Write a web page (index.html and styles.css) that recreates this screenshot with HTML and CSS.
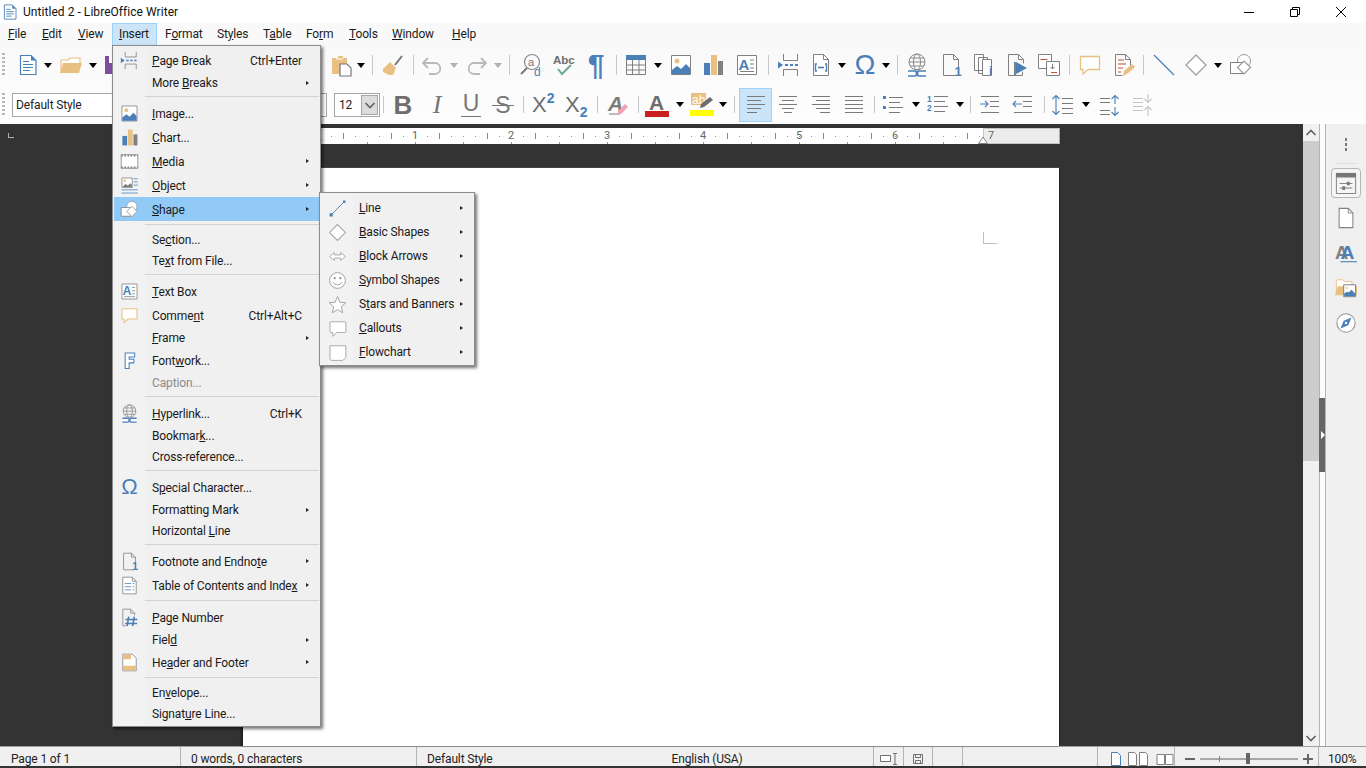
FILE: index.html
```html
<!DOCTYPE html>
<html lang="en">
<head>
<meta charset="utf-8">
<title>Untitled 2 - LibreOffice Writer</title>
<link rel="stylesheet" href="styles.css">
</head>
<body>
<svg class="defs" aria-hidden="true">
  <symbol id="doc" viewBox="0 0 24 24"><path d="M4.5 2.5h10.5l5 5v14H4.5z" fill="#fff" stroke="#4a7fb8" stroke-width="1.2"/><path d="M15 2.5v5h5z" fill="#4a7fb8"/><path d="M7 8.5h6M7 11.5h10M7 14.5h10M7 17.5h7" stroke="#4a7fb8" stroke-width="1.2"/></symbol>
  <symbol id="folder" viewBox="0 0 24 24"><path d="M2 19V7h7l2-2h10v6" fill="#fff" stroke="#e8c182" stroke-width="1.2"/><path d="M1 20l3-10h19l-3 10z" fill="#e8c182"/></symbol>
  <symbol id="save" viewBox="0 0 24 24"><path d="M2 3h20v18H2z" fill="#7d4e9f"/><path d="M6 3h12v7H6z" fill="#fff"/></symbol>
  <symbol id="paste" viewBox="0 0 24 24"><path d="M2 5h6V3h5v2h4v16H2z" fill="#e8c182"/><path d="M6 6h7" stroke="#fff"/><path d="M10 11h7l4 4v8H10z" fill="#fff" stroke="#777" stroke-width="1.2"/></symbol>
  <symbol id="brush" viewBox="0 0 24 24"><path d="M21 3l-7 9" stroke="#777" stroke-width="2"/><path d="M9 9l6 6-3 7H8l-6-3v-3z" fill="#e8c182"/></symbol>
  <symbol id="undo" viewBox="0 0 24 24"><path d="M8 5L3 10l5 5M3 10h12c7 0 7 11 0 11h-6" fill="none" stroke="#b9b9b9" stroke-width="1.8"/></symbol>
  <symbol id="redo" viewBox="0 0 24 24"><path d="M16 5l5 5-5 5M21 10H9c-7 0-7 11 0 11h6" fill="none" stroke="#b9b9b9" stroke-width="1.8"/></symbol>
  <symbol id="find" viewBox="0 0 24 24"><circle cx="13" cy="9" r="7.5" fill="none" stroke="#8a8a8a" stroke-width="1.2"/><path d="M8 15l-6 6" stroke="#777" stroke-width="2"/></symbol>
  <symbol id="spell" viewBox="0 0 24 24"><path d="M6 16l4 5 9-9" fill="none" stroke="#6fa98f" stroke-width="2"/></symbol>
  <symbol id="table" viewBox="0 0 24 24"><path d="M2 2h20v5H2z" fill="#4a7fb8"/><path d="M2.500 7v14.500h19V7M2.500 12h19M2.500 17h19M8.500 7v14M15 7v14" fill="none" stroke="#808080"/></symbol>
  <symbol id="image" viewBox="0 0 24 24"><path d="M2.500 2.500h19v19h-19z" fill="#fff" stroke="#808080"/><circle cx="8" cy="8" r="2.500" fill="#e8c182"/><path d="M3 21v-4l5-4 4 3 5-5 4 4v6z" fill="#4a7fb8"/></symbol>
  <symbol id="chart" viewBox="0 0 24 24"><path d="M3 10h6v12H3z" fill="#4a7fb8"/><path d="M10 2h6v20h-6z" fill="#e8c182"/><path d="M17 8h5v14h-5z" fill="#808080"/></symbol>
  <symbol id="tbox" viewBox="0 0 24 24"><path d="M2.500 2.500h19v19h-19z" fill="#fff" stroke="#808080"/><path d="M15 7h4M15 11h4M15 15h4M5 18.500h14" stroke="#808080"/></symbol>
  <symbol id="pbreak" viewBox="0 0 24 24"><path d="M6.500 1v6.500h14V1M6.500 23v-6.500h14V23" fill="none" stroke="#808080"/><path d="M8 12h3M13 12h3M18 12h3" stroke="#4a7fb8" stroke-width="2"/><path d="M1 8.500l5 3.500-5 3.500z" fill="#4a7fb8"/></symbol>
  <symbol id="field" viewBox="0 0 24 24"><path d="M4.500 1.500h10l5 5v16h-15z" fill="#fff" stroke="#808080"/><path d="M14.500 1.500v5h5" fill="none" stroke="#808080"/><path d="M8 11H6.500v7H8M16 11h1.500v7H16" fill="none" stroke="#4a7fb8" stroke-width="1.400"/><path d="M9 14.500h6" stroke="#4a7fb8" stroke-width="1.600"/></symbol>
  <symbol id="globe" viewBox="0 0 24 24"><circle cx="12" cy="9" r="8" fill="none" stroke="#8a8a8a"/><ellipse cx="12" cy="9" rx="3.500" ry="8" fill="none" stroke="#8a8a8a"/><path d="M4 9h16M5 5h14M5 13h14" stroke="#8a8a8a"/><path d="M3 18h7c2 0 2 5 0 5H3M21 18h-7c-2 0-2 5 0 5h7" fill="#fff" stroke="#4a7fb8" stroke-width="1.600"/></symbol>
  <symbol id="foot" viewBox="0 0 24 24"><path d="M4.500 1.500h10l5 5v14" fill="none" stroke="#808080"/><path d="M17 22.500H4.500v-21" fill="none" stroke="#808080"/><path d="M14.500 1.500v5h5" fill="none" stroke="#808080"/></symbol>
  <symbol id="end" viewBox="0 0 24 24"><path d="M2.500 1.500h9v16h-9zM6.500 4.500h9v16h-9z" fill="#fff" stroke="#808080"/><path d="M10.500 6.500h9v16h-9z" fill="#fff" stroke="#808080"/></symbol>
  <symbol id="bmark" viewBox="0 0 24 24"><path d="M3.500 22.500v-21h10l5 5v4M3.500 22.500h14v-4" fill="none" stroke="#808080"/><path d="M13.500 1.500v5h5" fill="none" stroke="#808080"/><path d="M9 9h2v13H9z" fill="#808080"/><path d="M11 9l11 6-11 6z" fill="#4a7fb8"/></symbol>
  <symbol id="xref" viewBox="0 0 24 24"><path d="M1.500 1.500h13v14h-13z" fill="#fff" stroke="#808080"/><path d="M9.500 8.500h13v14h-13z" fill="#fff" stroke="#808080"/><path d="M3.500 6.500h7M14 19.500h6" stroke="#c8502d" stroke-width="1.200"/><path d="M15.500 11v5M13.500 14l2 2 2-2" fill="none" stroke="#808080"/></symbol>
  <symbol id="comment" viewBox="0 0 24 24"><path d="M2.500 3.500h19v13H10l-5 4.500v-4.500H2.500z" fill="#fff" stroke="#e8c182" stroke-width="1.300"/></symbol>
  <symbol id="track" viewBox="0 0 24 24"><path d="M3.500 1.500h10l5 5v6M3.500 1.500v21h7" fill="none" stroke="#808080"/><path d="M13.500 1.500v5h5" fill="none" stroke="#808080"/><path d="M6 7h6M6 11h8M6 15h5M6 19h3" stroke="#c8502d" stroke-width="1.200"/><path d="M11 23l1-5 8-7 3 3-8 7z" fill="#e8c182"/></symbol>
  <symbol id="line" viewBox="0 0 24 24"><path d="M2 2l20 20" stroke="#4a7fb8" stroke-width="1.200"/></symbol>
  <symbol id="lineup" viewBox="0 0 24 24"><path d="M4 20L20 4" stroke="#4a7fb8" stroke-width="1.200"/><path d="M2 18h4v4H2zM19 2h3v3h-3z" fill="#4a7fb8"/></symbol>
  <symbol id="diamond" viewBox="0 0 24 24"><path d="M12 2l10 10-10 10L2 12z" fill="#fff" stroke="#a0a0a0" stroke-width="1.300"/></symbol>
  <symbol id="shapes" viewBox="0 0 24 24"><circle cx="15" cy="8" r="6.500" fill="#fff" stroke="#9a9a9a"/><path d="M1.500 9.500h13v11h-13z" fill="#fff" stroke="#808080"/><path d="M15 8l6.500 6.500L15 21l-6.500-6.500z" fill="#fff" stroke="#9a9a9a" stroke-width="1.200"/></symbol>
  <symbol id="clear" viewBox="0 0 24 24"><path d="M3 21h11" stroke="#7a7a7a"/></symbol>
  <symbol id="fcolor" viewBox="0 0 24 24"><path d="M0 18h24v6H0z" fill="#c9211e"/></symbol>
  <symbol id="hl" viewBox="0 0 24 24"><path d="M1 0h15v12H1z" fill="#e8c182"/><path d="M0 17h24v6H0z" fill="#ffff00"/></symbol>
  <symbol id="al" viewBox="0 0 24 24"><path d="M3 3.500h18M3 7.500h14M3 11.500h18M3 15.500h14M3 19.500h10" stroke="#7a7a7a"/></symbol>
  <symbol id="ac" viewBox="0 0 24 24"><path d="M3 3.500h18M6 7.500h12M3 11.500h18M6 15.500h12M8 19.500h8" stroke="#7a7a7a"/></symbol>
  <symbol id="ar" viewBox="0 0 24 24"><path d="M3 3.500h18M7 7.500h14M3 11.500h18M7 15.500h14M11 19.500h10" stroke="#7a7a7a"/></symbol>
  <symbol id="aj" viewBox="0 0 24 24"><path d="M3 3.500h18M3 7.500h18M3 11.500h18M3 15.500h18M3 19.500h18" stroke="#7a7a7a"/></symbol>
  <symbol id="bul" viewBox="0 0 24 24"><path d="M2 3h3v3H2zM2 13h3v3H2z" fill="#4a7fb8"/><path d="M8 4.500h14M8 9.500h11M8 14.500h14M8 19.500h11" stroke="#7a7a7a"/></symbol>
  <symbol id="num" viewBox="0 0 24 24"><path d="M9 3.500h14M9 8.500h11M9 13.500h14M9 18.500h11" stroke="#7a7a7a"/></symbol>
  <symbol id="ind" viewBox="0 0 24 24"><path d="M3 3.500h18M12 8.500h9M12 13.500h9M3 19.500h18" stroke="#7a7a7a"/><path d="M2 11h8M7 8l3 3-3 3" fill="none" stroke="#4a7fb8" stroke-width="1.100"/></symbol>
  <symbol id="out" viewBox="0 0 24 24"><path d="M3 3.500h18M12 8.500h9M12 13.500h9M3 19.500h18" stroke="#7a7a7a"/><path d="M11 11H2M5 8l-3 3 3 3" fill="none" stroke="#4a7fb8" stroke-width="1.100"/></symbol>
  <symbol id="space" viewBox="0 0 24 24"><path d="M11 5.500h11M11 10.500h11M11 15.500h11M11 20.500h11" stroke="#7a7a7a"/><path d="M5 2v20M1.500 6L5 2.500 8.500 6M1.500 18L5 21.500 8.500 18" fill="none" stroke="#4a7fb8" stroke-width="1.100"/></symbol>
  <symbol id="pup" viewBox="0 0 24 24"><path d="M2 5.500h10M2 9.500h10M2 17.500h10M2 21.500h10" stroke="#7a7a7a"/><path d="M17 3v8M13.500 6L17 2.500 20.500 6M17 14v8M13.500 19l3.500 3.500 3.500-3.500" fill="none" stroke="#4a7fb8" stroke-width="1.100"/></symbol>
  <symbol id="pdn" viewBox="0 0 24 24"><path d="M2 5.500h10M2 9.500h10M2 13.500h10M2 17.500h10" stroke="#c4c4c4"/><path d="M17 1v8M13.500 6L17 9.500 20.500 6M17 23v-9M13.500 17l3.500-3.500 3.500 3.500" fill="none" stroke="#c4c4c4" stroke-width="1.100"/></symbol>
  <symbol id="media" viewBox="0 0 24 24"><path d="M1.500 3.500h21v17h-21z" fill="#fff" stroke="#808080"/><path d="M1.500 4.500h21M1.500 19.500h21" stroke="#808080" stroke-width="2.500" stroke-dasharray="2 2"/></symbol>
  <symbol id="object" viewBox="0 0 24 24"><path d="M2.500 2.500h13v12h-13z" fill="#fff" stroke="#808080"/><circle cx="6" cy="6" r="1.500" fill="#e8c182"/><path d="M3 14l4-4 3 2 3-3 2 2v3z" fill="#808080"/><path d="M17.500 3.500h5M17.500 7.500h5M17.500 11.500h5M2 17.500h20.500M2 21.500h20.500" stroke="#4a7fb8"/></symbol>
  <symbol id="fontwork" viewBox="0 0 24 24"><path d="M6.500 2.500h12v5h-7v3h6v4.500h-6v7h-5z" fill="#fff" stroke="#4a7fb8" stroke-width="1.300"/></symbol>
  <symbol id="toc" viewBox="0 0 24 24"><path d="M3.500 1.500h12l5 5v16h-17z" fill="#fff" stroke="#808080"/><path d="M15.500 1.500v5h5" fill="none" stroke="#808080"/><path d="M6 9.500h8M16 9.500h2M6 13.500h8M16 13.500h2M6 17.500h8M16 17.500h2" stroke="#4a7fb8"/></symbol>
  <symbol id="pnum" viewBox="0 0 24 24"><path d="M3.500 22.500v-21h10l5 5v3M3.500 22.500h4" fill="none" stroke="#808080"/><path d="M13.500 1.500v5h5" fill="none" stroke="#808080"/><path d="M11 11l-2 12M18 11l-2 12M7 14.500h15M6.500 19.500h15" stroke="#4a7fb8" stroke-width="2"/></symbol>
  <symbol id="hf" viewBox="0 0 24 24"><path d="M3.500 1.500h12l5 5v16h-17z" fill="#fff" stroke="#808080"/><path d="M4 2h10v6H4zM4 16h16v6H4z" fill="#e8c182"/></symbol>
  <symbol id="arrows" viewBox="0 0 24 24"><path d="M2 12l6-5v3h8V7l6 5-6 5v-3H8v3z" fill="#fff" stroke="#9a9a9a"/></symbol>
  <symbol id="smile" viewBox="0 0 24 24"><circle cx="12" cy="12" r="10" fill="#fff" stroke="#a0a0a0" stroke-width="1.200"/><circle cx="8.500" cy="9" r="1.300" fill="#8a8a8a"/><circle cx="15.500" cy="9" r="1.300" fill="#8a8a8a"/><path d="M6.500 14c2 4.500 9 4.500 11 0" fill="none" stroke="#8a8a8a"/></symbol>
  <symbol id="star" viewBox="0 0 24 24"><path d="M12 2l3 7.200 7.500.6-5.700 5 1.800 7.700L12 18.400l-6.600 4.100 1.800-7.700-5.700-5L9 9.200z" fill="#fff" stroke="#a0a0a0" stroke-width="1.200"/></symbol>
  <symbol id="callout" viewBox="0 0 24 24"><path d="M3.500 3.500h18c.6 0 1 .4 1 1V16c0 .6-.4 1-1 1H11l-5 5v-5H3.500c-.6 0-1-.4-1-1V4.500c0-.6.400-1 1-1z" fill="#fff" stroke="#a0a0a0" stroke-width="1.100"/></symbol>
  <symbol id="flow" viewBox="0 0 24 24"><path d="M2.500 3.500h20v15l-4 3.500H5c-1.500 0-2.500-1-2.500-2.500z" fill="#fff" stroke="#a0a0a0" stroke-width="1.100"/></symbol>
  <symbol id="props" viewBox="0 0 24 24"><path d="M1 1h22v5H1z" fill="#777"/><path d="M1.500 6v17.500h21V6" fill="none" stroke="#777"/><path d="M5 12.500h14M5 17.500h14" stroke="#777"/><path d="M13 10.500h3v4h-3zM8 15.500h3v4H8z" fill="#777"/></symbol>
  <symbol id="page" viewBox="0 0 24 24"><path d="M4.500 1.500h10l5 5v16h-15z" fill="#fff" stroke="#808080" stroke-width="1.100"/><path d="M14.500 1.500v5h5" fill="none" stroke="#808080"/></symbol>
  <symbol id="gallery" viewBox="0 0 24 24"><path d="M1.500 19V5l1-2h6l2 2h8v5" fill="#fff" stroke="#e8c182"/><path d="M0 20l3-10h21v10z" fill="#e8c182"/><path d="M9.500 8.500h13v13h-13z" fill="#fff" stroke="#777"/><circle cx="13" cy="12" r="1.200" fill="#e8c182"/><path d="M10 21v-3l3-2 2 1 3-3 4 4v3z" fill="#4a7fb8"/></symbol>
  <symbol id="compass" viewBox="0 0 24 24"><circle cx="12" cy="12" r="10" fill="#fff" stroke="#909090" stroke-width="1.100"/><path d="M18 6l-3.500 8.500L6 18l3.500-8.500z" fill="#4a7fb8"/><circle cx="12" cy="12" r="1.300" fill="#fff"/></symbol>
  <symbol id="chev" viewBox="0 0 12 8"><path d="M1.500 6L6 1.500 10.500 6" fill="none" stroke="#606060" stroke-width="1.600"/></symbol>
  <symbol id="chevd" viewBox="0 0 12 8"><path d="M1.500 2L6 6.500 10.500 2" fill="none" stroke="#606060" stroke-width="1.600"/></symbol>
</svg>

<div class="app">
  <header class="title">
    <svg class="ti"><use href="#doc"/></svg>
    <span>Untitled 2 - LibreOffice Writer</span>
    <div class="win">
      <svg class="wb" viewBox="0 0 12 12"><path d="M1 6.500h10" stroke="#000"/></svg>
      <svg class="wb" viewBox="0 0 12 12"><path d="M1.500 3.500h7v7h-7zM3.500 3.500v-2h7v7h-2" fill="none" stroke="#000"/></svg>
      <svg class="wb" viewBox="0 0 12 12"><path d="M1 1l10 10M11 1L1 11" stroke="#000"/></svg>
    </div>
  </header>

  <nav class="menubar">
    <span class="mi"><u>F</u>ile</span>
    <span class="mi"><u>E</u>dit</span>
    <span class="mi"><u>V</u>iew</span>
    <span class="mi on"><u>I</u>nsert</span>
    <span class="mi">F<u>o</u>rmat</span>
    <span class="mi">St<u>y</u>les</span>
    <span class="mi">T<u>a</u>ble</span>
    <span class="mi">Fo<u>r</u>m</span>
    <span class="mi"><u>T</u>ools</span>
    <span class="mi"><u>W</u>indow</span>
    <span class="mi"><u>H</u>elp</span>
  </nav>

  <div class="tb tb1">
    <i class="grip"></i>
    <svg class="i"><use href="#doc"/></svg><i class="dd"></i>
    <svg class="i"><use href="#folder"/></svg><i class="dd"></i>
    <svg class="i"><use href="#save"/></svg>
    <svg class="i"><use href="#paste"/></svg><i class="dd"></i><i class="vs"></i>
    <svg class="i"><use href="#brush"/></svg><i class="vs"></i>
    <svg class="i"><use href="#undo"/></svg><i class="dd g"></i>
    <svg class="i"><use href="#redo"/></svg><i class="dd g"></i><i class="vs"></i>
    <svg class="i" viewBox="0 0 24 24"><use href="#find"/><text x="9" y="13" class="sv" font-size="11" fill="#777">a</text><text x="15" y="23" class="sv" font-size="12" fill="#4a7fb8">d</text></svg>
    <svg class="i" viewBox="0 0 24 24"><use href="#spell"/><text x="1" y="11" class="sv sb" font-size="11.5" fill="#6e6e6e">Abc</text></svg>
    <span class="gly pil">¶</span><i class="vs"></i>
    <svg class="i"><use href="#table"/></svg><i class="dd"></i>
    <svg class="i"><use href="#image"/></svg>
    <svg class="i"><use href="#chart"/></svg>
    <svg class="i" viewBox="0 0 24 24"><use href="#tbox"/><text x="3.500" y="16.500" class="sv sb" font-size="15" fill="#4a7fb8">A</text></svg><i class="vs"></i>
    <svg class="i"><use href="#pbreak"/></svg>
    <svg class="i"><use href="#field"/></svg><i class="dd"></i>
    <span class="gly om">Ω</span><i class="dd"></i><i class="vs"></i>
    <svg class="i"><use href="#globe"/></svg>
    <svg class="i" viewBox="0 0 24 24"><use href="#foot"/><text x="15.500" y="23" class="sv sb" font-size="13" fill="#4a7fb8">1</text></svg>
    <svg class="i" viewBox="0 0 24 24"><use href="#end"/><text x="17" y="22" class="sv sb" font-size="12" fill="#4a7fb8">i</text></svg>
    <svg class="i"><use href="#bmark"/></svg>
    <svg class="i"><use href="#xref"/></svg><i class="vs"></i>
    <svg class="i"><use href="#comment"/></svg>
    <svg class="i"><use href="#track"/></svg><i class="vs"></i>
    <svg class="i"><use href="#line"/></svg>
    <svg class="i"><use href="#diamond"/></svg><i class="dd"></i>
    <svg class="i"><use href="#shapes"/></svg>
  </div>

  <div class="tb tb2">
    <i class="grip"></i>
    <div class="combo">Default Style</div>
    <div class="size"><span>12</span><b class="sbtn"><svg class="cv"><use href="#chevd"/></svg></b></div>
    <i class="vs s"></i>
    <span class="gly bd">B</span>
    <span class="gly it">I</span>
    <span class="gly un">U</span>
    <span class="gly st">S</span>
    <i class="vs s"></i>
    <span class="gly sx">X<sup>2</sup></span>
    <span class="gly sx">X<sub>2</sub></span>
    <i class="vs s"></i>
    <svg class="i" viewBox="0 0 24 24"><use href="#clear"/><text x="2" y="18" class="sv sb ital" font-size="21" fill="#7a7a7a">A</text><path d="M12 18l7-7 3 3-7 7h-3z" fill="#f0a0b0"/></svg><i class="vs s"></i>
    <svg class="i" viewBox="0 0 24 24"><use href="#fcolor"/><text x="4" y="17" class="sv sb" font-size="21" fill="#6e6e6e">A</text></svg><i class="dd"></i>
    <svg class="i" viewBox="0 0 24 24"><use href="#hl"/><text x="2" y="11" class="sv" font-size="12" fill="#fff">ab</text><path d="M10 15l1-4 9-7 3 3-9 7z" fill="#6e6e6e"/></svg><i class="dd"></i><i class="vs s"></i>
    <div class="act"><svg class="i"><use href="#al"/></svg></div>
    <svg class="i"><use href="#ac"/></svg>
    <svg class="i"><use href="#ar"/></svg>
    <svg class="i"><use href="#aj"/></svg><i class="vs s"></i>
    <svg class="i"><use href="#bul"/></svg><i class="dd"></i>
    <svg class="i" viewBox="0 0 24 24"><use href="#num"/><text x="2" y="9" class="sv sb" font-size="8.500" fill="#4a7fb8">1</text><text x="2" y="18" class="sv sb" font-size="8.500" fill="#4a7fb8">2</text></svg><i class="dd"></i><i class="vs s"></i>
    <svg class="i"><use href="#ind"/></svg>
    <svg class="i"><use href="#out"/></svg><i class="vs s"></i>
    <svg class="i"><use href="#space"/></svg><i class="dd"></i>
    <svg class="i"><use href="#pup"/></svg>
    <svg class="i"><use href="#pdn"/></svg>
  </div>

  <main class="work">
    <section class="canvas">
      <div class="rrow">
        <div class="tabcell"><i class="tabmark"></i></div>
        <div class="ruler">
          <div class="rm"></div>
          <div class="rbody">
            <span>1</span><span>2</span><span>3</span><span>4</span><span>5</span><span>6</span><span>7</span>
            <svg class="rtri" viewBox="0 0 10 8"><path d="M.5 7.500L5 1l4.500 6.500z" fill="#fff" stroke="#808080"/></svg>
          </div>
          <div class="rm rmr"></div>
        </div>
      </div>
      <div class="page"><i class="crop"></i></div>
    </section>
    <aside class="vscroll">
      <div class="sbb"><svg class="cv"><use href="#chev"/></svg></div>
      <div class="thumb"></div>
      <div class="track"></div>
      <div class="sbb"><svg class="cv"><use href="#chevd"/></svg></div>
    </aside>
    <div class="split"><div class="handle"><i></i></div></div>
    <aside class="side">
      <div class="dots"><i></i><i></i><i></i></div>
      <hr class="shr">
      <div class="sb on"><svg class="si"><use href="#props"/></svg></div>
      <div class="sb"><svg class="si"><use href="#page"/></svg></div>
      <div class="sb"><svg class="si" viewBox="0 0 24 24"><text x="0" y="18" class="sv sb" font-size="20" fill="#808080">A</text><text x="6" y="19" class="sv sb" font-size="21" fill="#4a7fb8">A</text><path d="M6 21.500h18" stroke="#4a7fb8" stroke-width="1.200"/></svg></div>
      <div class="sb"><svg class="si"><use href="#gallery"/></svg></div>
      <div class="sb"><svg class="si"><use href="#compass"/></svg></div>
    </aside>
  </main>

  <footer class="status">
    <span class="c first">Page 1 of 1</span>
    <span class="c">0 words, 0 characters</span>
    <span class="c lang"><span>Default Style</span><span class="eng">English (USA)</span></span>
    <span class="c ctr"><svg class="st1" viewBox="0 0 18 14"><path d="M.5 3.500h10v6H.500z" fill="#fff" stroke="#707070"/><path d="M13 1.500h4M13 12.500h4M15 1.500v11" stroke="#707070"/></svg></span>
    <span class="c ctr"><svg class="st2" viewBox="0 0 12 12"><path d="M1.500 1.500h9v9h-9zM3.500 1.500v3h5v-3M3.500 10.500v-3h5v3" fill="none" stroke="#707070"/></svg></span>
    <span class="c"></span>
    <span class="c"></span>
    <span class="c views">
      <svg class="v1" viewBox="0 0 10 14"><path d="M.5 .5h6l3 3v10h-9z" fill="#fff" stroke="#4a7fb8"/></svg>
      <svg class="v2" viewBox="0 0 20 14"><path d="M.5 .5h6l2 2v11h-8zM11.500 .5h6l2 2v11h-8z" fill="#fff" stroke="#808080"/></svg>
      <svg class="v3" viewBox="0 0 18 14"><path d="M1 2.500h7.500v10H1zM9.500 2.500H17v10H9.500z" fill="#fff" stroke="#808080"/></svg>
    </span>
    <span class="c zoom">
      <i class="zm"></i>
      <span class="zs"><i class="zn"></i><i class="zt"></i></span>
      <i class="zp"></i>
    </span>
    <span class="pct">100%</span>
  </footer>
  <div class="foot"></div>

  <div class="menu m1">
    <div class="r"><span class="ic"><svg><use href="#pbreak"/></svg></span><span class="l"><u>P</u>age Break</span><span class="k">Ctrl+Enter</span></div>
    <div class="r n"><span class="ic"></span><span class="l">More <u>B</u>reaks</span><i class="a"></i></div>
    <div class="sep"></div>
    <div class="r"><span class="ic"><svg><use href="#image"/></svg></span><span class="l"><u>I</u>mage...</span></div>
    <div class="r"><span class="ic"><svg><use href="#chart"/></svg></span><span class="l"><u>C</u>hart...</span></div>
    <div class="r"><span class="ic"><svg><use href="#media"/></svg></span><span class="l"><u>M</u>edia</span><i class="a"></i></div>
    <div class="r"><span class="ic"><svg><use href="#object"/></svg></span><span class="l"><u>O</u>bject</span><i class="a"></i></div>
    <div class="r hot"><span class="ic"><svg><use href="#shapes"/></svg></span><span class="l"><u>S</u>hape</span><i class="a"></i></div>
    <div class="sep"></div>
    <div class="r n"><span class="ic"></span><span class="l">Se<u>c</u>tion...</span></div>
    <div class="r n"><span class="ic"></span><span class="l">Te<u>x</u>t from File...</span></div>
    <div class="sep"></div>
    <div class="r"><span class="ic"><svg viewBox="0 0 24 24"><use href="#tbox"/><text x="3.500" y="16.500" class="sv sb" font-size="15" fill="#4a7fb8">A</text></svg></span><span class="l"><u>T</u>ext Box</span></div>
    <div class="r"><span class="ic"><svg><use href="#comment"/></svg></span><span class="l">Comme<u>n</u>t</span><span class="k">Ctrl+Alt+C</span></div>
    <div class="r n"><span class="ic"></span><span class="l"><u>F</u>rame</span><i class="a"></i></div>
    <div class="r"><span class="ic"><svg><use href="#fontwork"/></svg></span><span class="l">Font<u>w</u>ork...</span></div>
    <div class="r n off"><span class="ic"></span><span class="l">Caption...</span></div>
    <div class="sep"></div>
    <div class="r"><span class="ic"><svg><use href="#globe"/></svg></span><span class="l"><u>H</u>yperlink...</span><span class="k">Ctrl+K</span></div>
    <div class="r n"><span class="ic"></span><span class="l">Bookmar<u>k</u>...</span></div>
    <div class="r n"><span class="ic"></span><span class="l">Cross-reference...</span></div>
    <div class="sep"></div>
    <div class="r"><span class="ic omi">Ω</span><span class="l">S<u>p</u>ecial Character...</span></div>
    <div class="r n"><span class="ic"></span><span class="l">Formattin<u>g</u> Mark</span><i class="a"></i></div>
    <div class="r n"><span class="ic"></span><span class="l">Horizontal <u>L</u>ine</span></div>
    <div class="sep"></div>
    <div class="r"><span class="ic"><svg viewBox="0 0 24 24"><use href="#foot"/><text x="15.500" y="23" class="sv sb" font-size="13" fill="#4a7fb8">1</text></svg></span><span class="l">Footnote and Endno<u>t</u>e</span><i class="a"></i></div>
    <div class="r"><span class="ic"><svg><use href="#toc"/></svg></span><span class="l">Table of Contents and Inde<u>x</u></span><i class="a"></i></div>
    <div class="sep"></div>
    <div class="r"><span class="ic"><svg><use href="#pnum"/></svg></span><span class="l"><u>P</u>age Number</span></div>
    <div class="r n"><span class="ic"></span><span class="l">Fiel<u>d</u></span><i class="a"></i></div>
    <div class="r"><span class="ic"><svg><use href="#hf"/></svg></span><span class="l">He<u>a</u>der and Footer</span><i class="a"></i></div>
    <div class="sep"></div>
    <div class="r n"><span class="ic"></span><span class="l">En<u>v</u>elope...</span></div>
    <div class="r n"><span class="ic"></span><span class="l">Signat<u>u</u>re Line...</span></div>
  </div>

  <div class="menu m2">
    <div class="r"><span class="ic"><svg><use href="#lineup"/></svg></span><span class="l"><u>L</u>ine</span><i class="a"></i></div>
    <div class="r"><span class="ic"><svg><use href="#diamond"/></svg></span><span class="l"><u>B</u>asic Shapes</span><i class="a"></i></div>
    <div class="r"><span class="ic"><svg><use href="#arrows"/></svg></span><span class="l"><u>B</u>lock Arrows</span><i class="a"></i></div>
    <div class="r"><span class="ic"><svg><use href="#smile"/></svg></span><span class="l"><u>S</u>ymbol Shapes</span><i class="a"></i></div>
    <div class="r"><span class="ic"><svg><use href="#star"/></svg></span><span class="l">S<u>t</u>ars and Banners</span><i class="a"></i></div>
    <div class="r"><span class="ic"><svg><use href="#callout"/></svg></span><span class="l"><u>C</u>allouts</span><i class="a"></i></div>
    <div class="r"><span class="ic"><svg><use href="#flow"/></svg></span><span class="l"><u>F</u>lowchart</span><i class="a"></i></div>
  </div>
</div>
</body>
</html>
```
FILE: styles.css
```css
* { box-sizing: border-box; }
html, body { margin: 0; padding: 0; }
body { font: 12px/16px Roboto, "Liberation Sans", sans-serif; letter-spacing: -.14px; color: #1a1a1a; background: #333; }
i { display: block; font-style: normal; }
.defs { position: absolute; width: 0; height: 0; }
.sv { font-family: "Liberation Sans", sans-serif; letter-spacing: 0; }
.sb { font-weight: 700; }
.ital { font-style: italic; }

.app { position: relative; width: 1366px; height: 768px; overflow: hidden; display: flex; flex-direction: column; }

.title { height: 23px; flex: none; background: #fff; display: flex; align-items: center; padding-left: 1px; font-size: 12px; letter-spacing: .05px; color: #111; gap: 4px; }
.ti { width: 18px; height: 18px; }
.win { margin-left: auto; display: flex; gap: 34px; padding-right: 19px; }
.wb { width: 12px; height: 12px; }

.menubar { height: 22px; flex: none; background: #f9f9f9; display: grid; grid-template-columns: 34px 36px 42px 45px 52px 46px 43px 43px 43px 60px 41px; align-items: stretch; }
.mi { padding: 3px 0 0 8px; }
.mi.on { background: #cce4f7; border: 1px solid #99d1ff; border-bottom: 0; padding: 2px 0 0 6px; }

.tb { flex: none; display: grid; align-items: center; justify-items: start; padding-left: 2px; background: #fbfbfb; }
.tb1 { height: 40px; background: linear-gradient(#f9f9f9, #fbfbfb);
  grid-template-columns: 14px 28px 15px 30px 14px 227px 27px 15px 9px 32px 7px 30px 15px 29px 15px 10px 33px 32px 32px 8px 30px 15px 32px 34px 33px 9px 32px 29px 15px 29px 15px 8px 34px 33px 33px 32px 32px 9px 34px 31px 9px 32px 30px 15px 24px; }
.tb2 { height: 39px; background: linear-gradient(#fbfbfb, #fdfdfd);
  grid-template-columns: 10px 322px 49px 8px 34px 34px 32px 32px 9px 33px 32px 9px 32px 7px 31px 14px 29px 15px 5px 37px 33px 33px 32px 7px 31px 13px 31px 14px 8px 33px 33px 7px 31px 16px 33px 24px; }
.i { width: 24px; height: 24px; display: block; }
.grip { width: 3px; height: 24px; background: repeating-linear-gradient(#b8b8b8 0 2px, transparent 2px 4px); }
.dd { width: 0; height: 0; border: 4.5px solid transparent; border-top: 5px solid #000; border-bottom: 0; }
.dd.g { border-top-color: #b0b0b0; }
.vs { width: 1px; height: 20px; background: #c8c8c8; }
.vs.s { height: 17px; }
.gly { position: relative; width: 24px; text-align: center; display: block; font-family: "Liberation Sans", sans-serif; letter-spacing: 0; color: #6e6e6e; line-height: 24px; }
.pil { font-size: 30px; font-weight: 700; color: #4a7fb8; line-height: 24px; }
.om { font-size: 28px; color: #4a7fb8; }
.bd { font-size: 26px; font-weight: 700; }
.it { font-size: 26px; font-style: italic; font-family: "Liberation Serif", serif; color: #777; }
.un { font-size: 23px; line-height: 20px; height: 24px; color: #777; }
.un::after { content: ""; position: absolute; left: 2px; right: 2px; bottom: 0; height: 1px; background: #777; }
.st { font-size: 23px; color: #777; }
.st::after { content: ""; position: absolute; left: 1px; right: 1px; top: 12px; height: 1px; background: #777; }
.sx { font-size: 22px; width: 28px; white-space: nowrap; text-align: left; color: #6e6e6e; }
.sx sup, .sx sub { font-size: 14px; font-weight: 700; color: #4a7fb8; line-height: 0; vertical-align: baseline; position: relative; }
.sx sup { top: -9px; }
.sx sub { top: 5px; }
.combo { width: 315px; height: 24px; background: #fff; border: 1px solid #a6a6a6; padding: 3px 0 0 3px; color: #222; }
.size { width: 46px; height: 24px; background: #fff; border: 1px solid #a6a6a6; padding: 1px 1px 1px 4px; display: flex; justify-content: space-between; align-items: center; color: #222; }
.sbtn { width: 17px; height: 20px; background: #dcdcdc; border: 1px solid #a6a6a6; display: flex; align-items: center; justify-content: center; }
.cv { width: 12px; height: 8px; display: block; }
.act { width: 33px; height: 34px; background: #cce4f7; border: 1px solid #99d1ff; display: flex; align-items: center; justify-content: center; }

.work { flex: 1; min-height: 0; display: flex; }
.canvas { flex: 1; background: #333; display: flex; flex-direction: column; min-width: 0; }
.rrow { display: flex; height: 44px; padding-top: 4px; flex: none; }
.tabcell { width: 243px; flex: none; padding: 5px 0 0 8px; }
.tabmark { width: 6px; height: 5px; border-left: 1px solid #b0b0b0; border-bottom: 1px solid #b0b0b0; }
.ruler { width: 817px; height: 16px; display: flex; background: #fff; font-size: 11px; color: #666; line-height: 16px; }
.rm { width: 76px; flex: none; background: #ececec; }
.rmr { width: 77px; border: 1px solid #c4c4c4; border-right-color: #aaa; }
.rbody { position: relative; width: 664px; flex: none; display: flex; padding-left: 48px;
  background:
    repeating-linear-gradient(90deg, #999 0 1px, transparent 1px 48px) 0 14px / 100% 2px no-repeat,
    repeating-linear-gradient(90deg, transparent 0 24px, #888 24px 25px, transparent 25px 48px) 0 5px / 100% 6px no-repeat,
    repeating-linear-gradient(90deg, #999 0 1px, transparent 1px 12px) 0 8px / 100% 1px no-repeat,
    #fff; }
.rbody::before { content: ""; position: absolute; left: 1px; top: 1px; width: 3px; height: 12px; border-left: 1px solid #808080; border-radius: 3px 0 0 3px; }
.rbody span { width: 96px; flex: none; text-align: center; }
.rtri { position: absolute; right: -5px; bottom: 0; width: 10px; height: 8px; }
.page { position: relative; margin-left: 243px; width: 817px; flex: 1; background: #fff; border-right: 1px solid #222; box-shadow: 0 -1px 0 #444, -2px 0 2px rgba(0,0,0,.4); }
.crop { position: absolute; left: 740px; top: 64px; width: 14px; height: 12px; border-left: 1px solid #c0c0c0; border-bottom: 1px solid #c0c0c0; }

.vscroll { width: 16px; flex: none; background: #f0f0f0; display: flex; flex-direction: column; }
.sbb { height: 17px; flex: none; display: flex; align-items: center; justify-content: center; }
.thumb { height: 320px; flex: none; background: #cdcdcd; }
.track { flex: 1; }
.split { width: 7px; flex: none; background: #fbfbfb; border-left: 1px solid #b4b4b4; border-right: 1px solid #b4b4b4; padding-top: 274px; }
.handle { width: 6px; height: 74px; margin-left: -1px; background: #666; display: flex; align-items: center; padding-left: 2px; }
.handle i { width: 0; height: 0; border: 4px solid transparent; border-left: 4px solid #fff; border-right: 0; }
.side { width: 40px; flex: none; background: #f0f0f0; display: flex; flex-direction: column; align-items: center; }
.dots { margin-top: 14px; display: flex; flex-direction: column; gap: 2px; }
.dots i { width: 2px; height: 3px; background: #777; }
.shr { width: 22px; height: 1px; border: 0; background: #dcdcdc; margin: 12px 0 4px; }
.sb { width: 30px; height: 30px; margin-bottom: 5px; display: flex; align-items: center; justify-content: center; border: 1px solid transparent; border-radius: 4px; }
.sb.on { background: #f5f5f5; border-color: #b4b4b4; }
.si { width: 22px; height: 22px; }

.status { height: 20px; flex: none; background: #f0f0f0; border-top: 1px solid #a0a0a0; display: grid; align-items: stretch; grid-template-columns: 181px 236px 457px 30px 29px 30px 135px 77px 144px 47px; line-height: 24px; color: #222; overflow: hidden; }
.c { border-right: 1px solid #b4b4b4; padding-left: 10px; white-space: nowrap; }
.c.first { padding-left: 11px; }
.lang { display: flex; }
.eng { margin-left: 179px; }
.ctr { padding: 0; display: flex; align-items: center; justify-content: center; }
.st1 { width: 18px; height: 14px; }
.st2 { width: 12px; height: 12px; }
.views { padding: 0 0 0 13px; display: flex; align-items: center; gap: 7px; }
.v1 { width: 10px; height: 14px; }
.v2 { width: 20px; height: 14px; }
.v3 { width: 18px; height: 14px; margin-left: 1px; }
.zoom { padding: 0 0 0 10px; display: flex; align-items: center; }
.zm { width: 10px; height: 2px; background: #666; }
.zs { position: relative; width: 98px; height: 2px; background: #a8a8a8; margin: 0 5px; }
.zn { position: absolute; left: 19px; top: -2px; width: 1px; height: 6px; background: #888; }
.zt { position: absolute; left: 46px; top: -5px; width: 4px; height: 11px; background: #666; }
.zp { position: relative; width: 10px; height: 2px; background: #666; }
.zp::before { content: ""; position: absolute; left: 4px; top: -4px; width: 2px; height: 10px; background: #666; }
.pct { padding-left: 9px; }
.foot { height: 2px; flex: none; background: #333; }

.menu { position: absolute; background: linear-gradient(90deg, #f2f2f2 0 33px, #f0f0f0 33px); border: 1px solid #8c8c8c; box-shadow: 2px 2px 3px rgba(0,0,0,.55); color: #1a1a1a; }
.m1 { left: 112px; top: 45px; width: 209px; padding: 2px 1px; }
.m2 { left: 319px; top: 192px; width: 156px; padding: 3px 1px 1px; }
.r { height: 24px; display: flex; align-items: center; }
.r.n { height: 21px; }
.r.hot { background: #91c9f7; }
.r.off { color: #8a8a8a; }
.ic { width: 31px; flex: none; display: flex; align-items: center; justify-content: center; }
.ic svg { width: 19px; height: 19px; display: block; }
.omi { font: 22px/24px "Liberation Sans", sans-serif; color: #4a7fb8; }
.l { flex: 1; padding: 2px 0 0 7px; white-space: nowrap; }
.k { margin-right: 17px; padding-top: 2px; }
.r.n .l { padding-top: 0; }
.a { width: 0; height: 0; margin-right: 10px; border: 2.5px solid transparent; border-left: 3px solid #222; border-right: 0; }
.sep { height: 8px; margin-left: 31px; padding-top: 3px; }
.sep::before { content: ""; display: block; height: 1px; background: #d2d2d2; }
.m2 .ic { width: 32px; }
.m2 .l { padding: 0 0 0 6px; }
```
